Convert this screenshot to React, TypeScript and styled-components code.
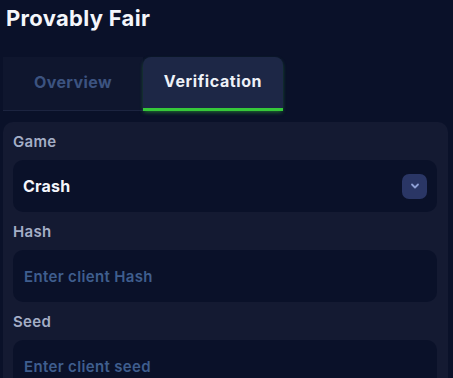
import React from 'react';
import styled, { createGlobalStyle } from 'styled-components';

const GlobalStyle = createGlobalStyle`
  html, body {
    margin: 0;
    padding: 0;
    background: #0a1129;
  }
  body {
    font-family: Inter, "Noto Sans", "Liberation Sans", sans-serif;
    -webkit-font-smoothing: antialiased;
  }
  * {
    box-sizing: border-box;
  }
`;

const Page = styled.div`
  width: 453px;
  height: 378px;
  overflow: hidden;
  background: #0a1129;
  padding: 4px 5px 0 3px;
`;

const Title = styled.h1`
  margin: 0 0 25px 3px;
  font-size: 22px;
  line-height: 28px;
  font-weight: 700;
  letter-spacing: 0.3px;
  color: #f4f6fb;
`;

const TabList = styled.div`
  display: flex;
  width: 280px;
  height: 54px;
  margin-bottom: 11px;
`;

const Tab = styled.button<{ $active?: boolean }>`
  flex: 0 0 140px;
  display: flex;
  align-items: center;
  justify-content: center;
  padding: 0 0 4px;
  border: none;
  font-family: inherit;
  font-size: 16px;
  font-weight: 700;
  letter-spacing: ${(p) => (p.$active ? '0.6px' : '0.4px')};
  cursor: pointer;
  color: ${(p) => (p.$active ? '#eef1f8' : '#3c5380')};
  background: ${(p) => (p.$active ? '#1d2746' : '#0f162e')};
  border-radius: ${(p) => (p.$active ? '8px 8px 0 0' : '0')};
  border-bottom: ${(p) => (p.$active ? '3px solid #36c83a' : '1px solid #1c2440')};
  box-shadow: ${(p) => (p.$active ? '0 2px 4px -1px rgba(54, 200, 58, 0.55)' : 'none')};
  align-self: stretch;
`;

const Panel = styled.div`
  background: #141a32;
  border-radius: 10px;
  padding: 10px 11px 20px 10px;
  display: flex;
  flex-direction: column;
  gap: 10px;
`;

const Field = styled.div`
  display: flex;
  flex-direction: column;
  gap: 8px;
`;

const Label = styled.div`
  font-size: 15px;
  line-height: 20px;
  font-weight: 600;
  letter-spacing: 0.3px;
  color: #a4aec6;
`;

const Box = styled.div`
  height: 52px;
  border-radius: 10px;
  background: #0a1129;
  display: flex;
  align-items: center;
  justify-content: space-between;
  padding: 0 10px 0 10px;
`;

const Value = styled.span`
  font-size: 16px;
  font-weight: 700;
  letter-spacing: 0.2px;
  color: #f4f6fb;
`;

const Input = styled.input`
  width: 100%;
  height: 100%;
  border: none;
  outline: none;
  background: transparent;
  padding: 0 1px;
  font-family: inherit;
  font-size: 15px;
  font-weight: 600;
  letter-spacing: 0.35px;
  color: #f4f6fb;

  &::placeholder {
    color: #3f5e8e;
  }
`;

const ChevronButton = styled.span`
  width: 25px;
  height: 25px;
  border-radius: 7px;
  background: #2a3665;
  display: flex;
  align-items: center;
  justify-content: center;
`;

function Chevron() {
  return (
    <svg width="12" height="12" viewBox="0 0 12 12" fill="none">
      <path d="M3 4.5L6 7.5L9 4.5" stroke="#8e9fd4" strokeWidth="1.8" strokeLinecap="round" strokeLinejoin="round" />
    </svg>
  );
}

export default function App() {
  return (
    <Page>
      <GlobalStyle />
      <Title>Provably Fair</Title>
      <TabList>
        <Tab>Overview</Tab>
        <Tab $active>Verification</Tab>
      </TabList>
      <Panel>
        <Field>
          <Label>Game</Label>
          <Box>
            <Value>Crash</Value>
            <ChevronButton>
              <Chevron />
            </ChevronButton>
          </Box>
        </Field>
        <Field>
          <Label>Hash</Label>
          <Box>
            <Input placeholder="Enter client Hash" />
          </Box>
        </Field>
        <Field>
          <Label>Seed</Label>
          <Box>
            <Input placeholder="Enter client seed" />
          </Box>
        </Field>
      </Panel>
    </Page>
  );
}
